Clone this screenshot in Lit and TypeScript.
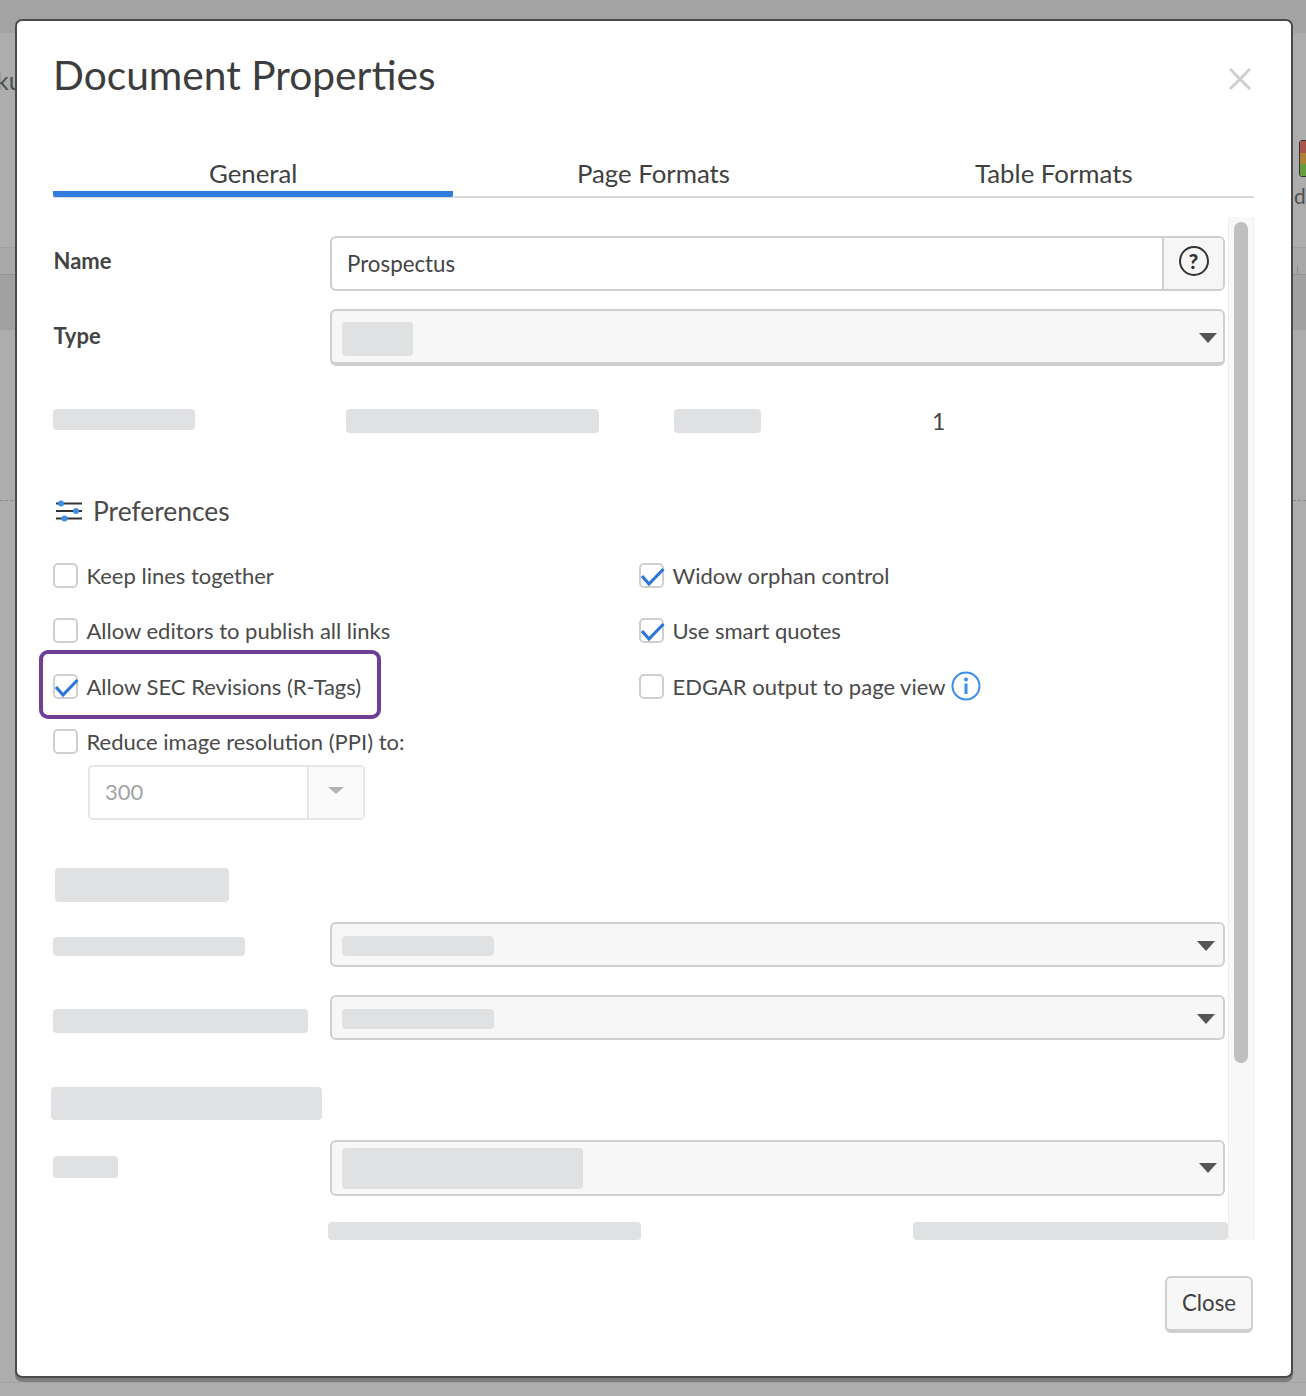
import { LitElement, html, css } from "lit";
import { customElement } from "lit/decorators.js";

@customElement("app-root")
export class AppRoot extends LitElement {
  static styles = css`
    :host { display: block; position: relative; width: 1306px; height: 1396px; overflow: hidden; background: #adadad; font-family: Lato, "Noto Sans", sans-serif; color: #444; box-sizing: border-box; }
    * { box-sizing: border-box; }
    .bg { position: absolute; }
    .bg-top { left: 0; top: 0; width: 1306px; height: 33px; background: #a3a3a3; }
    .bg-band { left: 0; top: 247px; width: 1306px; height: 27px; border-top: 1px solid #a0a0a0; background: #a9a9a9; }
    .bg-band2 { left: 0; top: 274px; width: 1306px; height: 56px; border-top: 1px solid #949494; background: #a1a1a1; }
    .bg-dash { left: 0; top: 500px; width: 1306px; border-top: 1px dashed #8a8a8a; }
    .bg-line { left: 0; top: 1382px; width: 1306px; border-top: 1px solid #a3a3a3; }
    .bg-text { font-size: 25px; color: #505050; line-height: 26px; }
    .bg-ku { left: -4px; top: 67px; }
    .bg-d { left: 1294px; top: 183px; font-size: 21px; }
    .bg-tick { left: 1297px; top: 265px; width: 1px; height: 9px; background: #8c8c8c; }
    .lights { left: 1299px; top: 140px; width: 12px; height: 37px; border: 1.5px solid #333; border-radius: 3px; overflow: hidden; display: flex; flex-direction: column; }
    .lights i { flex: 1; }
    .lights .r { background: #a9544f; } .lights .o { background: #ae8234; } .lights .g { background: #689a40; }

    .dialog { position: absolute; left: 15px; top: 19px; width: 1278px; height: 1359px; background: #fff; border: 2px solid #4a4a4a; border-radius: 7px; box-shadow: 0 4px 0 #7d7d7d; padding: 29px 37px 0 36px; display: flex; flex-direction: column; }
    .head { display: flex; justify-content: space-between; height: 50px; }
    h1 { margin: 0; font-size: 40.700px; font-weight: 400; line-height: 50px; color: #3d3d3d; }
    .x { margin: 18px 3px 0 0; width: 22px; height: 22px; }
    .x path { stroke: #cfcfcf; stroke-width: 3; fill: none; }
    .tabs { margin-top: 56px; display: grid; grid-template-columns: repeat(3, 1fr); border-bottom: 2px solid #d9d9d9; height: 42px; }
    .tab { height: 40px; text-align: center; font-size: 25.800px; line-height: 35px; color: #404040; }
    .tab.on { height: 41px; border-bottom: 6px solid #2f7ede; border-radius: 2px; }
    .body { margin: 19px 0 0 -16px; padding-left: 16px; height: 1023px; display: flex; overflow: hidden; }
    .form { width: 1175px; padding-right: 3px; flex: none; position: relative; }
    .track { width: 26px; flex: none; background: #f8f8f8; border-left: 1px solid #eee; border-right: 1px solid #eee; padding: 5px 5px 0 5px; }
    .thumb { height: 841px; background: #bfbfbf; border-radius: 8px; }

    .row { display: grid; grid-template-columns: 277px 1fr; align-items: center; }
    .label { font-size: 22px; font-weight: 700; color: #444; margin-left: 0.5px; }
    .name-row { margin-top: 19px; align-items: start; }
    .name-row .label { line-height: 50px; }
    .type-row { margin-top: 18px; align-items: start; }
    .type-row .label { line-height: 54px; }
    .field { display: flex; height: 55px; border: 2px solid #cfcfcf; border-radius: 6px; overflow: hidden; }
    .field .val { flex: 1; padding: 0 15px; font-size: 22.300px; line-height: 51px; color: #444; }
    .addon { width: 61px; background: #f6f6f6; border-left: 2px solid #cfcfcf; display: flex; align-items: center; justify-content: center; padding-bottom: 5px; }
    .help { width: 30px; height: 30px; border: 2.5px solid #333; border-radius: 50%; font-size: 21px; font-weight: 900; line-height: 25px; text-align: center; color: #333; }
    .select { display: flex; align-items: center; justify-content: space-between; background: #f7f7f7; border: 2px solid #cfcfcf; border-radius: 6px; padding: 0 6px 0 10px; }
    .select.tall { height: 57px; border-bottom-width: 4px; padding-right: 6px; }
    .select.tall .sk-type { margin-top: 4px; }
    .select.tall .caret { margin-top: 2px; }
    .select.mid { height: 45px; padding: 2px 8px 0 10px; }
    .select.big { height: 56px; padding-right: 6px; }
    .caret { width: 0; height: 0; border-left: 9px solid transparent; border-right: 9px solid transparent; border-top: 10px solid #555; }
    .sk { background: #e0e1e2; border-radius: 4px; display: block; flex: none; }
    .sk-type { width: 71px; height: 34px; }
    .skrow { margin-top: 43px; display: flex; align-items: flex-start; height: 24px; }
    .sk1 { width: 142px; height: 21px; }
    .sk2 { margin-left: 151px; width: 253px; height: 24px; }
    .sk3 { margin-left: 75px; width: 87px; height: 24px; }
    .num { margin-left: 171px; font-size: 23px; line-height: 24px; color: #444; }
    .pref { margin-top: 62px; display: flex; align-items: center; gap: 10px; height: 32px; font-size: 26.400px; color: #4a4a4a; padding-left: 2px; }
    .pref svg { width: 28px; height: 24px; flex: none; }
    .checks { margin-top: 36px; display: grid; grid-template-columns: 586px 1fr; row-gap: 31.5px; grid-auto-rows: 24px; }
    .check { display: flex; align-items: center; gap: 8.500px; font-size: 22px; color: #4a4a4a; position: relative; white-space: nowrap; height: 24px; }
    .box { width: 25px; height: 25px; flex: none; border: 2px solid #cfcfcf; border-radius: 5px; background: #fff; position: relative; }
    .box svg { position: absolute; left: -2px; top: -2px; width: 27px; height: 25px; overflow: visible; }
    .box path { fill: none; stroke: #2b76d6; stroke-width: 3.200; }
    .hl { position: absolute; left: -14px; top: -24px; width: 342px; height: 69px; border: 4.500px solid #6f3f97; border-radius: 9px; pointer-events: none; }
    .info { width: 30px; height: 30px; flex: none; margin: -1px 0 0 -3px; }
    .combo { margin: 11.5px 0 0 35px; width: 277px; height: 55px; border: 2px solid #e6e6e6; border-radius: 5px; display: flex; }
    .combo .v { width: 217px; padding-left: 15px; font-size: 22px; line-height: 50px; color: #a3a3a3; }
    .combo .btn { flex: 1; background: #fafafa; border-left: 2px solid #e6e6e6; display: flex; align-items: center; justify-content: center; padding-bottom: 4px; }
    .combo .caret { border-left-width: 8px; border-right-width: 8px; border-top-width: 7px; border-top-color: #b5b5b5; }
    .h-sk1 { margin: 48px 0 0 2px; width: 174px; height: 34px; }
    .r1 { margin-top: 20px; }
    .r2 { margin-top: 28px; }
    .r3 { margin-top: 20px; }
    .lab1 { width: 192px; height: 19px; margin-top: 4px; }
    .lab2 { width: 255px; height: 24px; margin-top: 6px; }
    .lab3 { width: 65px; height: 22px; margin-top: -2px; }
    .inner { width: 152px; height: 20px; }
    .inner-big { width: 241px; height: 41px; }
    .h-sk2 { margin: 47px 0 0 -2px; width: 271px; height: 33px; }
    .bot { margin-top: 26px; display: flex; padding-left: 275px; }
    .bot1 { width: 313px; height: 18px; }
    .bot2 { margin-left: 272px; width: 315px; height: 18px; }
    .foot { margin-top: 36px; display: flex; justify-content: flex-end; }
    .close { width: 88px; height: 57px; background: #f7f7f7; border: 2px solid #cfcfcf; border-bottom-width: 4px; border-radius: 6px; font: 400 22.200px Lato, sans-serif; color: #404040; padding: 0 0 2px; margin-right: 1px; }
  `;

  private tick() {
    return html`<svg viewBox="0 0 27 25"><path d="M3 13l7 8L24.500 6"></path></svg>`;
  }

  private check(label: string, on = false) {
    return html`<div class="check"><span class="box">${on ? this.tick() : ""}</span>${label}</div>`;
  }

  render() {
    return html`
      <div class="bg bg-top"></div>
      <div class="bg bg-band"></div>
      <div class="bg bg-band2"></div>
      <div class="bg bg-dash"></div>
      <div class="bg bg-line"></div>
      <div class="bg bg-tick"></div>
      <div class="bg bg-text bg-ku">ku</div>
      <div class="bg bg-text bg-d">d</div>
      <div class="bg lights"><i class="r"></i><i class="o"></i><i class="g"></i></div>

      <div class="dialog">
        <div class="head">
          <h1>Document Properties</h1>
          <svg class="x" viewBox="0 0 22 22"><path d="M1 1l20 20M21 1L1 21"></path></svg>
        </div>
        <div class="tabs">
          <div class="tab on">General</div>
          <div class="tab">Page Formats</div>
          <div class="tab">Table Formats</div>
        </div>
        <div class="body">
          <div class="form">
            <div class="row name-row">
              <div class="label">Name</div>
              <div class="field">
                <div class="val">Prospectus</div>
                <div class="addon"><div class="help">?</div></div>
              </div>
            </div>
            <div class="row type-row">
              <div class="label">Type</div>
              <div class="select tall"><span class="sk sk-type"></span><span class="caret"></span></div>
            </div>
            <div class="skrow">
              <span class="sk sk1"></span><span class="sk sk2"></span><span class="sk sk3"></span>
              <span class="num">1</span>
            </div>
            <div class="pref">
              <svg viewBox="0 0 28 24">
                <path d="M1 4.500h26M1 12h26M1 19.500h26" stroke="#333" stroke-width="1.800" fill="none"></path>
                <circle cx="6" cy="4.500" r="3" fill="#3b8fe8"></circle>
                <circle cx="21" cy="12" r="3" fill="#3b8fe8"></circle>
                <circle cx="9.500" cy="19.500" r="3" fill="#3b8fe8"></circle>
              </svg>
              Preferences
            </div>
            <div class="checks">
              ${this.check("Keep lines together")}
              ${this.check("Widow orphan control", true)}
              ${this.check("Allow editors to publish all links")}
              ${this.check("Use smart quotes", true)}
              <div class="check"><span class="box">${this.tick()}</span>Allow SEC Revisions (R-Tags)<span class="hl"></span></div>
              <div class="check">
                <span class="box"></span>EDGAR output to page view
                <svg class="info" viewBox="0 0 30 30">
                  <circle cx="15" cy="15" r="13.500" fill="none" stroke="#3b8fe8" stroke-width="2"></circle>
                  <circle cx="15" cy="8.500" r="2" fill="#3b8fe8"></circle>
                  <path d="M15 12.500v10.500" stroke="#3b8fe8" stroke-width="3" fill="none"></path>
                </svg>
              </div>
              ${this.check("Reduce image resolution (PPI) to:")}
            </div>
            <div class="combo"><div class="v">300</div><div class="btn"><span class="caret"></span></div></div>
            <span class="sk h-sk1"></span>
            <div class="row r1"><span class="sk lab1"></span><div class="select mid"><span class="sk inner"></span><span class="caret"></span></div></div>
            <div class="row r2"><span class="sk lab2"></span><div class="select mid"><span class="sk inner"></span><span class="caret"></span></div></div>
            <span class="sk h-sk2"></span>
            <div class="row r3"><span class="sk lab3"></span><div class="select big"><span class="sk inner-big"></span><span class="caret"></span></div></div>
            <div class="bot"><span class="sk bot1"></span><span class="sk bot2"></span></div>
          </div>
          <div class="track"><div class="thumb"></div></div>
        </div>
        <div class="foot"><button class="close">Close</button></div>
      </div>
    `;
  }
}
